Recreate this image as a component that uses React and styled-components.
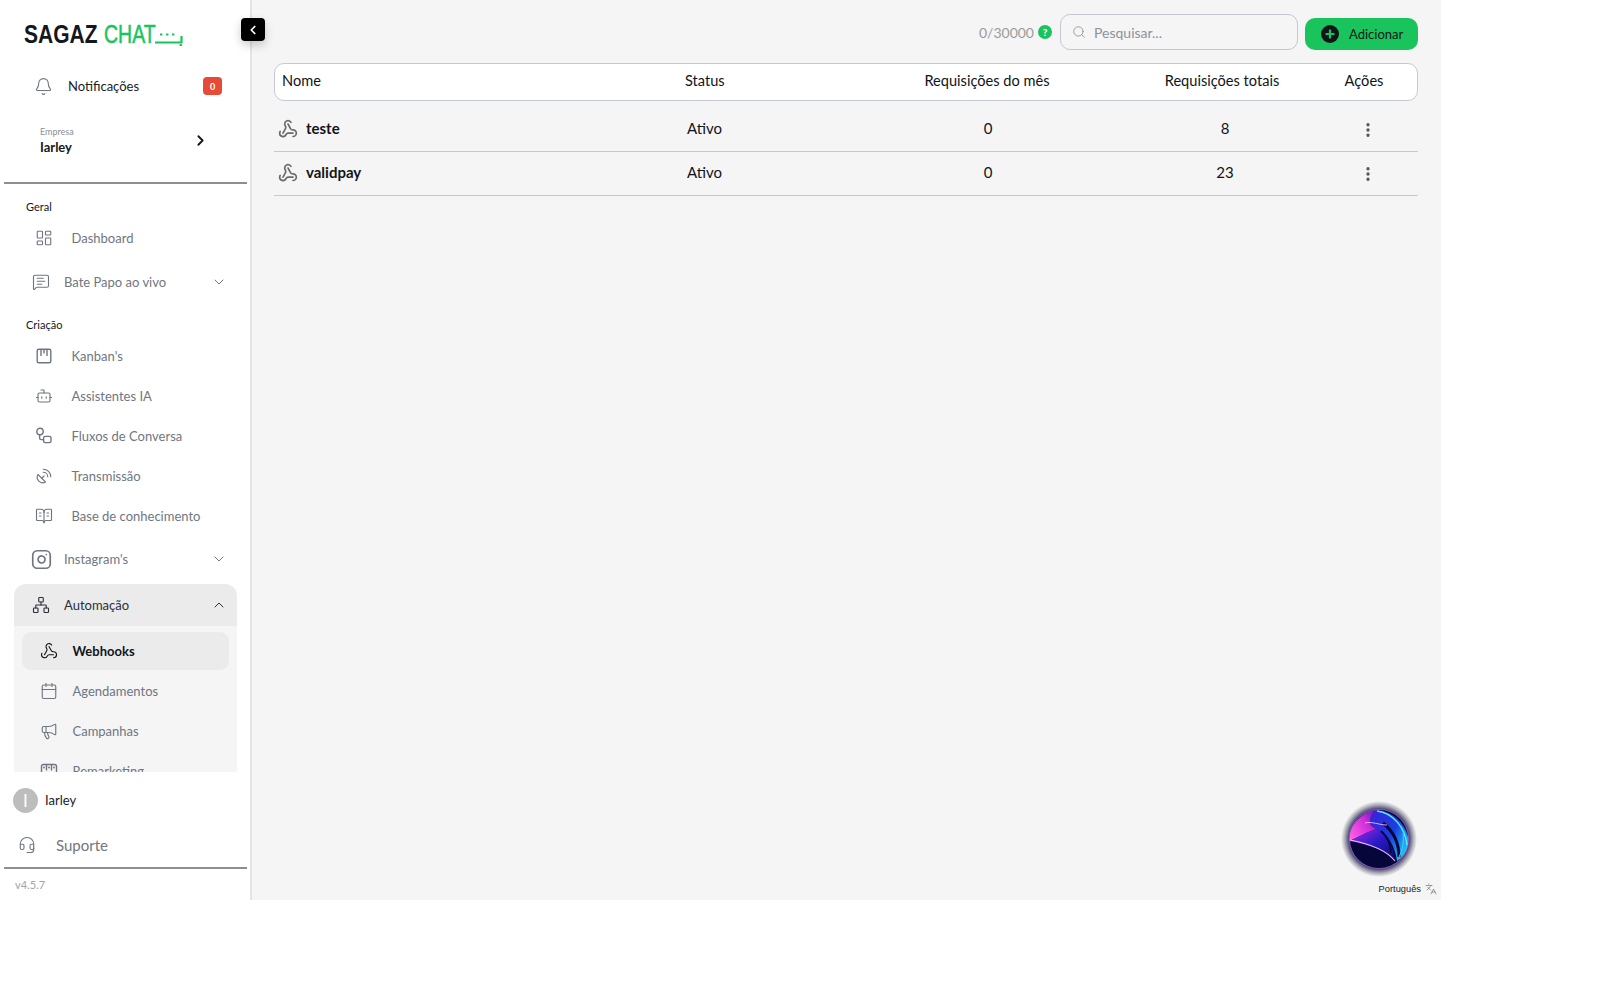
import React from "react";
import styled, { createGlobalStyle } from "styled-components";
import { Bell, ChevronLeft, ChevronRight, ChevronDown, ChevronUp, LayoutDashboard, MessageSquareText, Bot, SatelliteDish, BookOpenText, Instagram, Network, Webhook, Calendar, Megaphone, Headset, Search, EllipsisVertical, Languages } from "lucide-react";

const FONT = `Lato, "Noto Sans", sans-serif`;
const Global = createGlobalStyle`
  html, body { margin: 0; padding: 0; background: #fff; font-family: ${FONT}; color: #11141a; }
  * { box-sizing: border-box; }
`;
const Shell = styled.div`width: 1441px; height: 900px; display: flex; background: #f5f5f5; position: relative; overflow: hidden;`;
const Sidebar = styled.aside`width: 252px; flex: none; background: #fff; border-right: 2px solid #e4e4e4; display: flex; flex-direction: column; position: relative;`;
const LogoRow = styled.div`height: 68px; flex: none; padding: 22px 0 0 24px; display: flex; align-items: flex-start;`;
const LogoWord = styled.span`display: inline-block; font-family: "Liberation Sans", sans-serif; font-size: 25px; line-height: 24px; font-weight: ${p => p.$w}; color: ${p => p.$c}; width: ${p => p.$width}px; white-space: nowrap; transform: scaleX(${p => p.$sx}); transform-origin: left center; -webkit-text-stroke: ${p => p.$stroke || 0}px ${p => p.$c};`;
const LogoTail = styled.svg`margin: 2px 0 0 -2px; flex: none;`;
const CollapseBtn = styled.button`position: absolute; top: 18px; right: -15px; width: 24px; height: 23px; background: #000; color: #fff; border: 0; border-radius: 4px; display: flex; align-items: center; justify-content: center; padding: 0; box-shadow: 0 4px 10px rgba(0,0,0,.2); z-index: 5;`;
const NotifRow = styled.div`height: 36px; flex: none; display: flex; align-items: center; padding: 0 0 0 34px; font-size: 13px; gap: 15px; color: #1c2028; margin-bottom: 15px;`;
const Badge = styled.span`margin-left: auto; margin-right: 28px; width: 19px; height: 18px; background: #e54b36; color: #fff; font-size: 9px; font-weight: 700; border-radius: 4px; display: flex; align-items: center; justify-content: center;`;
const Company = styled.div`height: 63px; flex: none; padding: 7px 41px 0 40px; display: flex; align-items: flex-start; justify-content: space-between;`;
const CompanyLabel = styled.div`font-size: 9px; color: #8a8f98; line-height: 11px; margin-bottom: 2px;`;
const CompanyName = styled.div`font-size: 13px; font-weight: 700; color: #15171c; line-height: 16px;`;
const CompanyArrow = styled(ChevronRight)`margin-top: 6px;`;
const Divider = styled.hr`margin: 0 3px 0 4px; height: 2px; background: #8e8e8e; border: 0; flex: none;`;
const Nav = styled.nav`flex: 1; min-height: 0; overflow: hidden; padding: 0 13px 0 14px;`;
const SectionLabel = styled.div`font-size: 11px; line-height: 14px; color: #14171c; padding-left: 12px; margin: ${p => p.$mt}px 0 4px;`;
const Item = styled.div`height: 40px; display: flex; align-items: center; padding-left: 21px; gap: 18.5px; font-size: 13px; color: #6f7682;`;
const Group = styled.div`height: ${p => p.$open ? 42 : 44}px; display: flex; align-items: center; padding: 0 10px 0 ${p => p.$pl || 18}px; gap: ${p => p.$gap || 14}px; font-size: 13px; color: ${p => p.$open ? "#2b2f36" : "#6f7682"}; background: ${p => p.$open ? "#ebebeb" : "transparent"}; border-radius: ${p => p.$open ? "12px 12px 0 0" : "0"}; margin-top: ${p => p.$mt || 0}px;`;
const GroupLabel = styled.span`flex: 1;`;
const SubList = styled.div`background: #f5f5f5; padding: 6px 8px 0; height: 170px;`;
const SubItem = styled.div`height: 38px; margin-bottom: 2px; border-radius: 9px; display: flex; align-items: center; padding-left: 18px; gap: 14.5px; font-size: 13px; background: ${p => p.$active ? "#ebebeb" : "transparent"}; color: ${p => p.$active ? "#11141a" : "#6f7682"}; font-weight: ${p => p.$active ? 700 : 400};`;
const UserRow = styled.div`height: 56px; flex: none; display: flex; align-items: center; padding-left: 13px; gap: 7px; font-size: 13px; color: #1c2028;`;
const Avatar = styled.div`width: 25px; height: 25px; border-radius: 50%; background: #bdbdbd; color: #fff; font-size: 17px; display: flex; align-items: center; justify-content: center;`;
const SupportRow = styled.div`height: 34px; flex: none; display: flex; align-items: center; padding-left: 18px; gap: 20px; font-size: 15px; color: #6f7682; margin-bottom: 5px;`;
const Version = styled.div`height: 31px; flex: none; padding: 9px 0 0 15px; font-size: 11px; color: #a0a4ac;`;
const Main = styled.main`flex: 1; padding: 14px 23px 0 22px; position: relative; min-width: 0;`;
const TopBar = styled.div`display: flex; align-items: center; justify-content: flex-end; height: 36px; margin-bottom: 13px;`;
const Count = styled.span`font-size: 14px; color: #9b9b9b; margin-right: 4px;`;
const HelpDot = styled.span`color: #fff; background: #19c45c; border-radius: 50%; width: 14px; height: 14px; display: flex; align-items: center; justify-content: center; font-size: 10px; font-weight: 900; margin-right: 8px;`;
const SearchBox = styled.div`width: 238px; height: 36px; border: 1px solid #c5c8d6; border-radius: 10px; display: flex; align-items: center; padding-left: 11px; gap: 8px; font-size: 14px; color: #8d929a; margin-right: 7px;`;
const AddBtn = styled.button`width: 113px; height: 32px; margin-top: 4px; background: #19c45c; color: #11141a; border: 0; border-radius: 10px; font: 13px ${FONT}; display: flex; align-items: center; padding-left: 16px; gap: 10px;`;
const PlusDisc = styled.svg`flex: none;`;
const Head = styled.div`display: grid; grid-template-columns: 403px 176px 252px 218px 66px; height: 38px; padding-bottom: 3px; background: #fff; border: 1px solid #c5c8d6; border-radius: 10px; align-items: center; padding-left: 7px; font-size: 14.6px; color: #11141a; margin-bottom: 7px;`;
const Row = styled.div`display: grid; grid-template-columns: 409px 176px 250px 224px 62px; height: 44px; padding-bottom: 4px; border-bottom: 1px solid #c5c8d6; align-items: center; padding-left: 4px; font-size: 15px; color: #11141a;`;
const HeadCell = styled.div`text-align: ${p => p.$a || "left"};`;
const NameCell = styled.div`display: flex; align-items: center; gap: 8px; font-weight: 700; font-size: 15px;`;
const RowIcon = styled(Webhook)`margin-top: 2px;`;
const Cell = styled.div`text-align: ${p => p.$a || "left"};`;
const Dots = styled(EllipsisVertical)`display: block; margin: 5px auto 0;`;
const Orb = styled.svg`position: absolute; right: 24px; bottom: 23px;`;
const Lang = styled.div`position: absolute; right: 4px; bottom: 5px; font: 9.3px "Liberation Sans", sans-serif; color: #222; display: flex; align-items: center; gap: 4px;`;
const ic = { size: 18, strokeWidth: 1.5 };

const FlowIcon = (p) => (
  <svg width={p.size} height={p.size} viewBox="0 0 18 18" fill="none" stroke="currentColor" strokeWidth="1.4">
    <circle cx="5" cy="4.5" r="3.2" />
    <rect x="8.6" y="9.4" width="7.4" height="6.2" rx="1.6" />
    <path d="M4.6 7.8V11a1.6 1.6 0 0 0 1.6 1.6h2.4" />
  </svg>
);
const BoardIcon = (p) => (
  <svg width={p.size} height={p.size} viewBox="0 0 18 18" fill="none" stroke="currentColor" strokeWidth="1.4">
    <rect x="2.2" y="2.2" width="13.6" height="13.6" rx="1.6" />
    <path d="M6 2.5v6.5M9 2.5v4M12 2.5v6.5" />
  </svg>
);
const RemarkIcon = (p) => (
  <svg width={p.size} height={p.size} viewBox="0 0 18 18" fill="none" stroke="currentColor" strokeWidth="1.4">
    <rect x="1.5" y="2.5" width="15" height="13" rx="2" />
    <path d="M6.5 2.5v6M11.5 2.5v6" />
    <path d="M4 5.5h.01M9 5.5h.01M14 5.5h.01" strokeLinecap="round" strokeWidth="1.8" />
  </svg>
);

const OrbArt = () => (
  <Orb width="76" height="76" viewBox="0 0 76 76">
    <defs>
      <radialGradient id="halo" cx="50%" cy="50%" r="50%">
        <stop offset="70%" stopColor="#0d0a55" />
        <stop offset="80%" stopColor="#55507f" />
        <stop offset="90%" stopColor="#aeaeb8" />
        <stop offset="100%" stopColor="#f5f5f5" />
      </radialGradient>
      <linearGradient id="pink" x1="0" y1="0.8" x2="1" y2="0.2">
        <stop offset="0%" stopColor="#ff5fe6" />
        <stop offset="60%" stopColor="#d02fd8" />
        <stop offset="100%" stopColor="#5a1fc4" />
      </linearGradient>
      <linearGradient id="blue" x1="0" y1="0" x2="1" y2="0.7">
        <stop offset="0%" stopColor="#3a20d8" />
        <stop offset="60%" stopColor="#1a3fe0" />
        <stop offset="100%" stopColor="#18c8f5" />
      </linearGradient>
      <linearGradient id="mid" x1="0" y1="0" x2="1" y2="1">
        <stop offset="0%" stopColor="#b02be0" />
        <stop offset="50%" stopColor="#2a1ac8" />
        <stop offset="100%" stopColor="#0a0a70" />
      </linearGradient>
      <clipPath id="ball"><circle cx="38" cy="38" r="29.5" /></clipPath>
    </defs>
    <circle cx="38" cy="38" r="38" fill="url(#halo)" />
    <g clipPath="url(#ball)">
      <rect x="8" y="8" width="60" height="60" fill="#07063a" />
      <path d="M34 9C52 9 67 24 68 42 67 50 62 56 56 60 54 46 48 34 36 28 26 24 28 18 34 9Z" fill="url(#blue)" />
      <path d="M8 40C8 24 20 12 34 9 28 18 26 24 36 28 28 30 18 36 8 40Z" fill="url(#pink)" />
      <path d="M8 40C18 36 28 30 36 28 48 34 52 46 54 60 46 50 30 44 8 40Z" fill="url(#mid)" />
      <path d="M9 39C30 43 46 50 54 60" fill="none" stroke="#f6c4ff" strokeWidth="1.1" />
      <path d="M36 10C52 12 64 26 66 44" fill="none" stroke="#5ce6ff" strokeWidth="1.4" />
      <path d="M42 22C52 30 58 42 58 56" fill="none" stroke="#07063a" strokeWidth="3" />
      <path d="M40 30C47 36 50 44 50 52" fill="none" stroke="#07063a" strokeWidth="2" />
      <path d="M24 22C30 20 38 24 46 24" fill="none" stroke="#ffb0f6" strokeWidth=".9" />
      <path d="M62 32C63 40 62 48 58 56" fill="none" stroke="#3fd0ff" strokeWidth="1" />
    </g>
    <circle cx="38" cy="38" r="29.5" fill="none" stroke="#e58cf5" strokeOpacity=".6" strokeWidth=".8" />
  </Orb>
);

const menuA = [[BoardIcon, "Kanban's"],[Bot, "Assistentes IA"],[FlowIcon, "Fluxos de Conversa"],[SatelliteDish, "Transmissão"],[BookOpenText, "Base de conhecimento"]];
const rows = [["teste", "8"],["validpay", "23"]];

export default function App() {
  return (
    <>
      <Global />
      <Shell>
        <Sidebar>
          <LogoRow>
            <LogoWord $c="#15171c" $w={700} $sx={0.84} $width={80}>SAGAZ</LogoWord>
            <LogoWord $c="#19c45c" $w={400} $sx={0.78} $stroke={0.5} $width={53}>CHAT</LogoWord>
            <LogoTail width="28" height="22" viewBox="0 0 28 22" fill="none" stroke="#19c45c" strokeWidth="2.2">
              <path d="M0 18.5H26.5V12" />
              <path d="M24.5 21.2h2.5" />
              <path d="M5 10.5h2.4M11 10.5h2.4M17 10.5h2.4" />
            </LogoTail>
          </LogoRow>
          <CollapseBtn><ChevronLeft size={14} strokeWidth={3} /></CollapseBtn>
          <NotifRow><Bell size={19} strokeWidth={1.4} color="#6f7682" /><span>Notificações</span><Badge>0</Badge></NotifRow>
          <Company>
            <div><CompanyLabel>Empresa</CompanyLabel><CompanyName>Iarley</CompanyName></div>
            <CompanyArrow size={17} strokeWidth={2.6} color="#15171c" />
          </Company>
          <Divider />
          <Nav>
            <SectionLabel $mt={16}>Geral</SectionLabel>
            <Item><LayoutDashboard {...ic} /><span>Dashboard</span></Item>
            <Group $mt={2}><MessageSquareText {...ic} /><GroupLabel>Bate Papo ao vivo</GroupLabel><ChevronDown size={16} strokeWidth={1.5} /></Group>
            <SectionLabel $mt={14}>Criação</SectionLabel>
            {menuA.map(([I, t]) => <Item key={t}><I {...ic} /><span>{t}</span></Item>)}
            <Group $mt={1} $pl={17} $gap={12}><Instagram size={21} strokeWidth={1.9} /><GroupLabel>Instagram's</GroupLabel><ChevronDown size={16} strokeWidth={1.5} /></Group>
            <Group $open $mt={3}><Network {...ic} /><GroupLabel>Automação</GroupLabel><ChevronUp size={16} strokeWidth={1.5} /></Group>
            <SubList>
              <SubItem $active><Webhook {...ic} color="#15171c" /><span>Webhooks</span></SubItem>
              <SubItem><Calendar {...ic} /><span>Agendamentos</span></SubItem>
              <SubItem><Megaphone {...ic} /><span>Campanhas</span></SubItem>
              <SubItem><RemarkIcon size={18} /><span>Remarketing</span></SubItem>
            </SubList>
          </Nav>
          <UserRow><Avatar>I</Avatar><span>Iarley</span></UserRow>
          <SupportRow><Headset {...ic} /><span>Suporte</span></SupportRow>
          <Divider />
          <Version>v4.5.7</Version>
        </Sidebar>
        <Main>
          <TopBar>
            <Count>0/30000</Count><HelpDot>?</HelpDot>
            <SearchBox><Search size={14} strokeWidth={1.5} /><span>Pesquisar...</span></SearchBox>
            <AddBtn>
              <PlusDisc width="18" height="18" viewBox="0 0 18 18"><circle cx="9" cy="9" r="9" fill="#11141a" /><path d="M9 4.5v9M4.5 9h9" stroke="#19c45c" strokeWidth="2.2" /></PlusDisc>
              <span>Adicionar</span>
            </AddBtn>
          </TopBar>
          <Head>
            <HeadCell>Nome</HeadCell><HeadCell>Status</HeadCell><HeadCell $a="center">Requisições do mês</HeadCell><HeadCell $a="center">Requisições totais</HeadCell><HeadCell $a="center">Ações</HeadCell>
          </Head>
          {rows.map(([n, t]) => (
            <Row key={n}>
              <NameCell><RowIcon size={20} strokeWidth={2} color="#6b6b6b" /><span>{n}</span></NameCell>
              <Cell>Ativo</Cell><Cell $a="center">0</Cell><Cell $a="center">{t}</Cell>
              <Cell $a="center"><Dots size={18} strokeWidth={2.4} color="#555" /></Cell>
            </Row>
          ))}
          <OrbArt />
          <Lang>Português <Languages size={12} strokeWidth={1.4} color="#777" /></Lang>
        </Main>
      </Shell>
    </>
  );
}
